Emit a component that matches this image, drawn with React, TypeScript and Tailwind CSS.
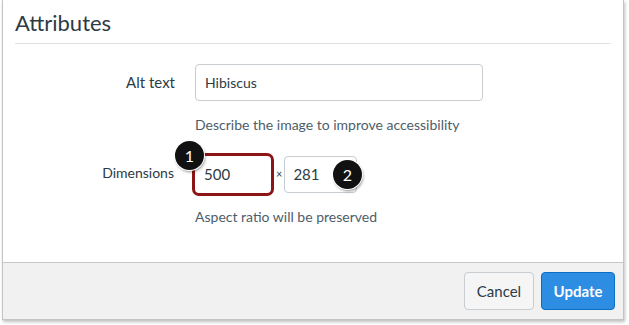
import React from "react";

const font = { fontFamily: "Lato, 'Open Sans', 'Liberation Sans', sans-serif" };

function Badge({ n }: { n: string }) {
  return (
    <div className="absolute flex h-[29px] w-[29px] items-center justify-center rounded-full bg-[#111] text-[16px] leading-none text-white shadow-[1px_2px_3px_rgba(0,0,0,0.45)] ring-1 ring-white">
      {n}
    </div>
  );
}

export default function App() {
  return (
    <div className="h-[325px] w-[629px] overflow-hidden bg-white" style={font}>
      <div className="ml-[2px] flex h-[320px] w-[622px] flex-col border-x border-b border-[#c4c4c4] bg-white shadow-[1px_2px_3px_rgba(0,0,0,0.25)]">
        {/* Header */}
        <div className="mx-[12px] h-[44px] border-b border-[#e1e1e1] pt-[9px]">
          <h2 className="text-[22px] leading-[27px] text-[#2d3b45]">Attributes</h2>
        </div>

        {/* Body */}
        <div className="flex flex-1 flex-col pt-[20px] text-[#2d3b45]">
          <div className="flex items-start">
            <div className="w-[172px] pt-[8px] text-right text-[15px] leading-[20px]">Alt text</div>
            <div className="ml-[20px] flex h-[37px] w-[288px] items-center rounded-[4px] border border-[#c7cdd1] px-[9px] text-[14px]">
              Hibiscus
            </div>
          </div>
          <div className="ml-[192px] mt-[14px] text-[14px] leading-[20px] text-[#4e5d69]">
            Describe the image to improve accessibility
          </div>

          <div className="relative mt-[18px] flex h-[43px] items-start">
            <div className="w-[171px] pt-[10px] text-right text-[14px] leading-[20px]">Dimensions</div>
            <div className="ml-[18px] flex h-[43px] w-[82px] items-center rounded-[7px] border-[3px] border-[#8c1414] px-[9px] text-[15px]">
              500
            </div>
            <div className="mx-[2px] self-center text-[11px] text-[#2d3b45]">×</div>
            <div className="mt-[3px] flex h-[37px] w-[73px] items-center rounded-[4px] border border-[#c7cdd1] px-[8px] text-[15px]">
              281
            </div>
            <div className="absolute left-[172px] top-[-12px]">
              <div className="relative">
                <Badge n="1" />
              </div>
            </div>
            <div className="absolute left-[330px] top-[7px]">
              <div className="relative">
                <Badge n="2" />
              </div>
            </div>
          </div>

          <div className="ml-[192px] mt-[11px] text-[14px] leading-[20px] text-[#4e5d69]">
            Aspect ratio will be preserved
          </div>
        </div>

        {/* Footer */}
        <div className="flex h-[57px] items-center justify-end gap-[7px] border-t border-[#c7c7c7] bg-[#f1f1f1] pr-[8px]">
          <button className="h-[38px] w-[70px] rounded-[4px] border border-[#c7cdd1] bg-[#f5f5f5] text-[15px] text-[#2d3b45]">
            Cancel
          </button>
          <button className="h-[38px] w-[74px] rounded-[4px] border border-[#0b6fc1] bg-[#2d8de3] text-[15px] font-bold text-white">
            Update
          </button>
        </div>
      </div>
    </div>
  );
}
